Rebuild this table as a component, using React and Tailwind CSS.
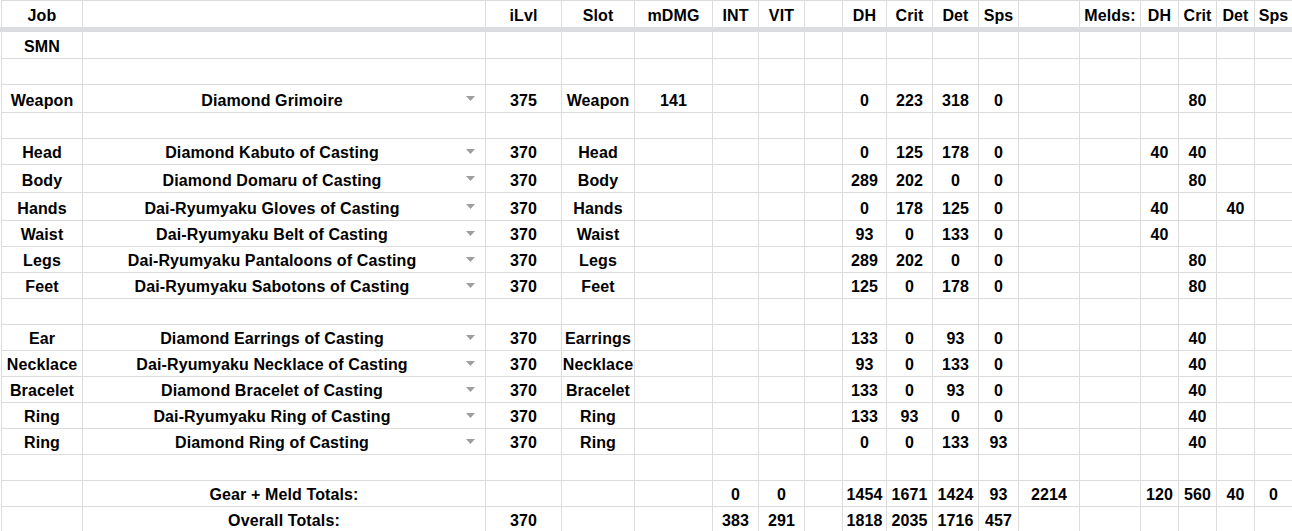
import React from "react";

const COLS =
  "grid grid-cols-[81px_403px_76px_73px_78px_46px_46px_38px_44px_46px_46px_40px_61px_61px_38px_38px_38px_38px]";

const HEADER = ["Job", "", "iLvl", "Slot", "mDMG", "INT", "VIT", "", "DH", "Crit", "Det", "Sps", "", "Melds:", "DH", "Crit", "Det", "Sps"];

const E = "";
const ROWS = [
  { h: "h-[27px]", c: ["SMN"] },
  { h: "h-[26px]", c: [] },
  { h: "h-[28px]", a: true, c: ["Weapon", "Diamond Grimoire", "375", "Weapon", "141", E, E, E, "0", "223", "318", "0", E, E, E, "80", E, E] },
  { h: "h-[26px]", c: [] },
  { h: "h-[26px]", a: true, c: ["Head", "Diamond Kabuto of Casting", "370", "Head", E, E, E, E, "0", "125", "178", "0", E, E, "40", "40", E, E] },
  { h: "h-[28px]", a: true, c: ["Body", "Diamond Domaru of Casting", "370", "Body", E, E, E, E, "289", "202", "0", "0", E, E, E, "80", E, E] },
  { h: "h-[28px]", a: true, c: ["Hands", "Dai-Ryumyaku Gloves of Casting", "370", "Hands", E, E, E, E, "0", "178", "125", "0", E, E, "40", E, "40", E] },
  { h: "h-[26px]", a: true, c: ["Waist", "Dai-Ryumyaku Belt of Casting", "370", "Waist", E, E, E, E, "93", "0", "133", "0", E, E, "40", E, E, E] },
  { h: "h-[26px]", a: true, c: ["Legs", "Dai-Ryumyaku Pantaloons of Casting", "370", "Legs", E, E, E, E, "289", "202", "0", "0", E, E, E, "80", E, E] },
  { h: "h-[26px]", a: true, c: ["Feet", "Dai-Ryumyaku Sabotons of Casting", "370", "Feet", E, E, E, E, "125", "0", "178", "0", E, E, E, "80", E, E] },
  { h: "h-[26px]", c: [] },
  { h: "h-[26px]", a: true, c: ["Ear", "Diamond Earrings of Casting", "370", "Earrings", E, E, E, E, "133", "0", "93", "0", E, E, E, "40", E, E] },
  { h: "h-[26px]", a: true, c: ["Necklace", "Dai-Ryumyaku Necklace of Casting", "370", "Necklace", E, E, E, E, "93", "0", "133", "0", E, E, E, "40", E, E] },
  { h: "h-[26px]", a: true, c: ["Bracelet", "Diamond Bracelet of Casting", "370", "Bracelet", E, E, E, E, "133", "0", "93", "0", E, E, E, "40", E, E] },
  { h: "h-[26px]", a: true, c: ["Ring", "Dai-Ryumyaku Ring of Casting", "370", "Ring", E, E, E, E, "133", "93", "0", "0", E, E, E, "40", E, E] },
  { h: "h-[26px]", a: true, c: ["Ring", "Diamond Ring of Casting", "370", "Ring", E, E, E, E, "0", "0", "133", "93", E, E, E, "40", E, E] },
  { h: "h-[26px]", c: [] },
  { h: "h-[26px]", c: [E, "Gear + Meld Totals:", E, E, E, "0", "0", E, "1454", "1671", "1424", "93", "2214", E, "120", "560", "40", "0"] },
  { h: "h-[26px]", c: [E, "Overall Totals:", "370", E, E, "383", "291", E, "1818", "2035", "1716", "457", E, E, E, E, E, E] },
];

const cellBase =
  "flex items-end justify-center border-r border-[#dcdcdc] pb-[2px] leading-[18px] whitespace-nowrap overflow-hidden";

function Arrow() {
  return (
    <div className="w-[24px] self-center flex pl-[5px]">
      <svg width="9" height="5" viewBox="0 0 9 5">
        <polygon points="0,0 9,0 4.5,5" fill="#9e9e9e" />
      </svg>
    </div>
  );
}

function Row({ h, cells, arrow, header }) {
  return (
    <div className={`${COLS} ${h}`}>
      {Array.from({ length: 18 }).map((_, i) => {
        const v = cells[i] || "";
        const border = header ? "" : "border-b";
        if (i === 1 && arrow) {
          return (
            <div key={i} className="flex items-stretch border-r border-b border-[#dcdcdc] whitespace-nowrap overflow-hidden">
              <div className="flex-1 flex items-end justify-center pb-[2px] leading-[18px]">{v}</div>
              <Arrow />
            </div>
          );
        }
        return (
          <div key={i} className={`${cellBase} ${border}`}>
            {v}
          </div>
        );
      })}
    </div>
  );
}

export default function App() {
  return (
    <div className="w-[1292px] h-[531px] overflow-hidden bg-white text-black font-['Liberation_Sans',Arial,sans-serif] font-bold text-[16px] tracking-[0.12px]">
      <div className="ml-[1px] border-l border-t border-[#dcdcdc]">
        <Row h="h-[26px]" cells={HEADER} header />
      </div>
      <div className="h-[5px] bg-[#dadce0]" />
      <div className="ml-[1px] border-l border-[#dcdcdc]">
        {ROWS.map((r, idx) => (
          <Row key={idx} h={r.h} cells={r.c} arrow={r.a} />
        ))}
      </div>
    </div>
  );
}
